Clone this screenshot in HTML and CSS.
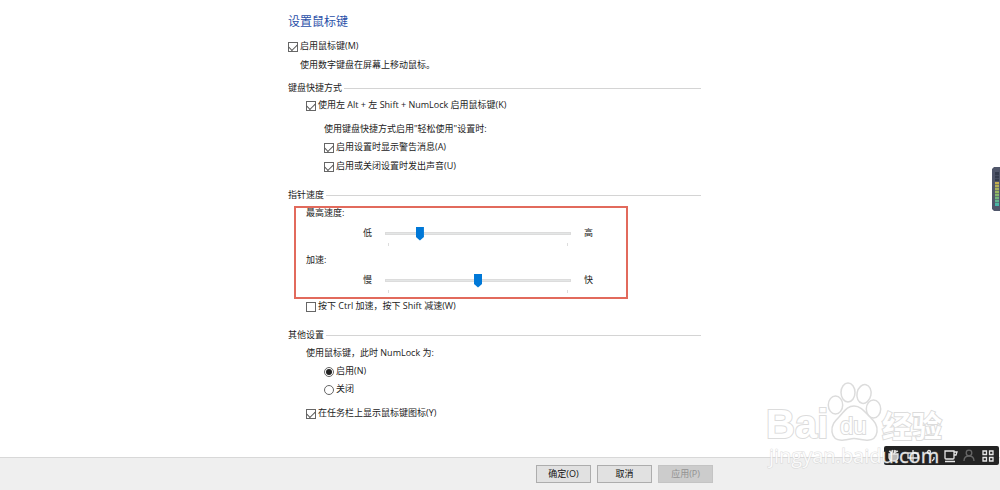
FILE: index.html
```html
<!DOCTYPE html>
<html lang="zh-CN">
<head>
<meta charset="utf-8">
<title>设置鼠标键</title>
<link rel="stylesheet" href="styles.css">
</head>
<body>
<form class="page">
  <main class="settings">
    <h1 class="title">设置鼠标键</h1>
    <label class="row row-enable"><input class="box" type="checkbox" checked><span>启用鼠标键(M)</span></label>
    <p class="row note">使用数字键盘在屏幕上移动鼠标。</p>

    <section class="group group-keys">
      <h2 class="heading">键盘快捷方式</h2>
      <label class="row indent"><input class="box" type="checkbox" checked><span>使用左 Alt + 左 Shift + NumLock 启用鼠标键(K)</span></label>
      <p class="row indent-2 space-l">使用键盘快捷方式启用"轻松使用"设置时:</p>
      <label class="row indent-2 space-s"><input class="box" type="checkbox" checked><span>启用设置时显示警告消息(A)</span></label>
      <label class="row indent-2 space-m"><input class="box" type="checkbox" checked><span>启用或关闭设置时发出声音(U)</span></label>
    </section>

    <section class="group group-speed">
      <h2 class="heading">指针速度</h2>
      <div class="marked">
        <label class="row" for="top-speed">最高速度:</label>
        <div class="slider-row">
          <span>低</span>
          <div class="slider"><input class="range" id="top-speed" type="range" min="0" max="100" value="17"><div class="ticks"></div></div>
          <span>高</span>
        </div>
        <label class="row" for="accel">加速:</label>
        <div class="slider-row">
          <span>慢</span>
          <div class="slider"><input class="range" id="accel" type="range" min="0" max="100" value="50"><div class="ticks"></div></div>
          <span>快</span>
        </div>
      </div>
      <label class="row indent"><input class="box" type="checkbox"><span>按下 Ctrl 加速，按下 Shift 减速(W)</span></label>
    </section>

    <section class="group group-other">
      <h2 class="heading">其他设置</h2>
      <p class="row indent">使用鼠标键，此时 NumLock 为:</p>
      <label class="row indent-2 space-s"><input class="box round" type="radio" name="numlock" checked><span>启用(N)</span></label>
      <label class="row indent-2 space-s"><input class="box round" type="radio" name="numlock"><span>关闭</span></label>
      <label class="row indent space-l"><input class="box" type="checkbox" checked><span>在任务栏上显示鼠标键图标(Y)</span></label>
    </section>
  </main>

  <footer class="actions">
    <button class="btn" type="button">确定(O)</button>
    <button class="btn" type="button">取消</button>
    <button class="btn" type="button" disabled>应用(P)</button>
  </footer>
</form>

<div class="meter">
  <svg width="8" height="44" viewBox="0 0 8 44">
    <defs><linearGradient id="level" x1="0" y1="0" x2="0" y2="1"><stop offset="0" stop-color="#c9ad4c"/><stop offset=".5" stop-color="#8fb765"/><stop offset="1" stop-color="#3fb5ae"/></linearGradient></defs>
    <path d="M2 0H8V44H2L0 42V2Z" fill="#50566a"/>
    <rect x="3" y="5" width="4" height="9" fill="#343b4c"/>
    <rect x="3" y="15" width="4" height="24" fill="url(#level)"/>
    <path d="M3 8.500H7M3 11.500H7M3 17.500H7M3 20.500H7M3 23.500H7M3 26.500H7M3 29.500H7M3 32.500H7M3 35.500H7" stroke="#50566a" stroke-opacity=".6"/>
  </svg>
</div>

<div class="ime">
  <svg width="115" height="20" viewBox="0 0 115 20" fill="none" stroke="#e6e6e6" stroke-width="1.300">
    <path d="M5 5L8 7L9 4M11 4L10 7L14 5M5 8H14V12Q13 15 10 15Q6 15 5 12Z" fill="#bbb"/>
    <path d="M24 7H34V12H24ZM29 4V16"/>
    <circle cx="45" cy="6" r="1.500"/><path d="M50 11V13L48 15"/>
    <path d="M61 5H70V12Q70 13 69 13H62Q61 13 61 12ZM70 6H73L72 9H70M61 15.500H71"/>
    <g stroke="#666"><circle cx="85" cy="7" r="2.800"/><path d="M80 15Q80 10 85 10Q90 10 90 15"/></g>
    <path d="M99 5H102.500V8.500H99ZM105.500 5H109V8.500H105.500ZM99 11.500H102.500V15H99ZM105.500 11.500H109V15H105.500Z"/>
  </svg>
</div>

<div class="watermark">
  <svg width="190" height="100" viewBox="0 0 190 100">
    <g fill="#fff" stroke="#dcdcdc" stroke-width="1.500">
      <ellipse cx="75.500" cy="25" rx="7.200" ry="9"/>
      <ellipse cx="88" cy="12.500" rx="7" ry="9.500"/>
      <ellipse cx="104" cy="14" rx="7" ry="9.500" transform="rotate(12 104 14)"/>
      <ellipse cx="113.500" cy="29" rx="7.200" ry="9"/>
      <path d="M94 26C87 26 84 32 79 37C75 41 71 45 72 52C73 58 77 61 84 60C88 60 90 58.500 94 58.500C98 58.500 101 60 105 60C112 61 116 58 117 52C118 45 114 41 110 37C105 32 101 26 94 26Z"/>
    </g>
    <g class="wm-text">
      <text class="wm-latin" x="6" y="58">Bai</text>
      <text class="wm-du" x="80" y="54">du</text>
      <text class="wm-cjk" x="122" y="57">经验</text>
      <text class="wm-url" x="9" y="83">jingyan.baidu.com</text>
    </g>
  </svg>
</div>
</body>
</html>
```
FILE: styles.css
```css
* { box-sizing: border-box; }

body {
  margin: 0;
  background: #fff;
  color: #222;
  font: 9px/12px "Open Sans", "Noto Sans CJK SC", sans-serif;
}

.page { display: flex; flex-direction: column; min-height: 100vh; }
.settings { flex: 1; max-width: 701px; padding: 14px 0 38px 288px; }

.title { margin: 0 0 10px; color: #2a50a8; font-size: 12px; line-height: 16px; font-weight: 400; }
.row { display: flex; align-items: center; gap: 2px; height: 12px; margin: 0; white-space: nowrap; }
.note { margin-top: 7px; padding-left: 12px; }
.indent { margin-left: 18px; }
.indent-2 { margin-left: 36px; }
.space-s { margin-top: 6px; }
.space-m { margin-top: 7px; }
.space-l { margin-top: 12px; }

.group-keys { margin-top: 11px; }
.group-speed, .group-other { margin-top: 17px; }
.heading {
  display: flex; align-items: center; gap: 2px;
  margin: 0 0 5px; font-size: 9px; line-height: 12px; font-weight: 400;
}
.heading::after { content: ""; flex: 1; height: 1px; background: #d4d4d4; }

.box {
  appearance: none; flex: none;
  width: 10px; height: 10px; margin: 2px 0 0;
  border: 1px solid #666; background: #fff;
  display: grid; place-items: center;
}
.box[type="checkbox"]:checked::before {
  content: ""; width: 7px; height: 4px; margin-top: -2px;
  border: solid #555; border-width: 0 0 1px 1px;
  transform: rotate(-45deg);
}
.round { border-radius: 50%; }
.round:checked::before { content: ""; width: 6px; height: 6px; border-radius: 50%; background: #222; }

.marked {
  width: 334px; height: 93px; margin-left: 6px; padding-left: 10px;
  border: 2px solid #e26a5c;
}
.marked .row { margin-top: -1px; }
.slider-row { display: flex; gap: 13px; height: 35px; padding: 8px 0 0 57px; }
.slider-row + .row { margin-top: 0; }
.slider { width: 186px; }
.range {
  appearance: none; display: block;
  width: 100%; height: 12px; margin: 0; background: transparent;
}
.range::-webkit-slider-runnable-track { height: 3px; background: #e4e6e6; border: 1px solid #dcdcdc; }
.range::-webkit-slider-thumb {
  appearance: none; width: 8px; height: 14px; margin-top: -6px;
  background: #0078d7;
  clip-path: polygon(0 0, 100% 0, 100% 75%, 50% 100%, 0 75%);
}
.ticks { height: 3px; margin: 4px 3px 0; border: solid #ddd; border-width: 0 1px; }

.group-speed > .indent { margin-top: 1px; }
.group-other .heading { margin-bottom: 6px; }

.actions {
  display: flex; gap: 6px; height: 33px; padding: 7px 0 0 536px;
  background: #efefef; border-top: 1px solid #d8d8d8;
}
.btn {
  width: 55px; height: 18px; padding: 0;
  border: 1px solid #adadad; background: #e1e1e1; color: #111;
  font: inherit;
}
.btn:disabled { background: #ccc; border-color: #c4c4c4; color: #929292; }

.meter { position: absolute; right: 0; top: 167px; height: 44px; }
.meter svg, .ime svg, .watermark svg { display: block; }
.ime { position: absolute; right: 1px; bottom: 25px; background: #232323; border-radius: 2px; height: 19px; }

.watermark { position: absolute; right: 50px; bottom: 10px; pointer-events: none; }
.watermark svg { overflow: visible; }
.wm-text { fill: #fff; stroke: #dcdcdc; stroke-width: 2px; paint-order: stroke; }
.wm-latin { font: 700 40px "Liberation Sans", sans-serif; }
.wm-du { font: 24px "Liberation Sans", sans-serif; }
.wm-cjk { font: 700 30px "Noto Sans CJK SC", sans-serif; }
.wm-url { font: 20px "Open Sans", sans-serif; stroke: rgb(190 190 190 / .5); fill: rgb(255 255 255 / .85); stroke-width: 1px; }
```
